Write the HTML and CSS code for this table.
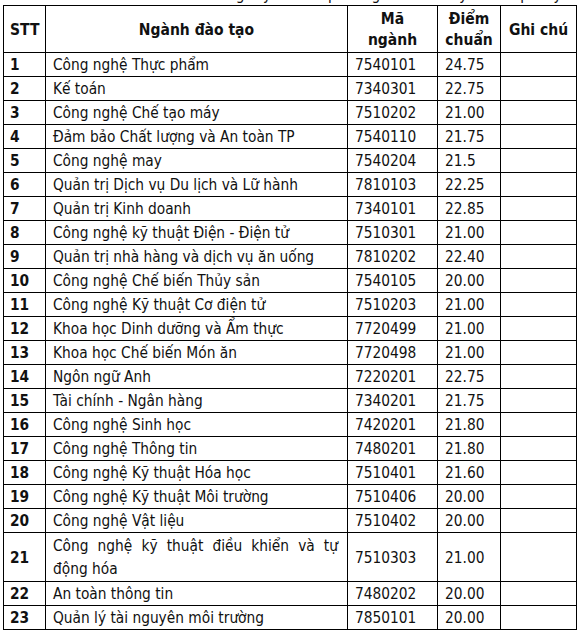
FILE: index.html
```html
<!DOCTYPE html>
<html lang="vi">
<head>
<meta charset="utf-8">
<link rel="stylesheet" href="styles.css">
</head>
<body>
<div class="cap-top"><p>Điểm chuẩn trúng tuyển theo phương thức xét tuyển kết quả kỳ thi tốt nghiệp THPT năm 2021 như sau:</p></div>
<table class="scores">
  <colgroup>
    <col class="c-stt"><col class="c-name"><col class="c-code"><col class="c-score"><col class="c-note">
  </colgroup>
  <thead>
    <tr>
      <th class="stt">STT</th>
      <th>Ngành đào tạo</th>
      <th>Mã<br>ngành</th>
      <th>Điểm<br>chuẩn</th>
      <th>Ghi chú</th>
    </tr>
  </thead>
  <tbody>
    <tr><td class="stt">1</td><td>Công nghệ Thực phẩm</td><td>7540101</td><td>24.75</td><td></td></tr>
    <tr><td class="stt">2</td><td>Kế toán</td><td>7340301</td><td>22.75</td><td></td></tr>
    <tr><td class="stt">3</td><td>Công nghệ Chế tạo máy</td><td>7510202</td><td>21.00</td><td></td></tr>
    <tr><td class="stt">4</td><td>Đảm bảo Chất lượng và An toàn TP</td><td>7540110</td><td>21.75</td><td></td></tr>
    <tr><td class="stt">5</td><td>Công nghệ may</td><td>7540204</td><td>21.5</td><td></td></tr>
    <tr><td class="stt">6</td><td>Quản trị Dịch vụ Du lịch và Lữ hành</td><td>7810103</td><td>22.25</td><td></td></tr>
    <tr><td class="stt">7</td><td>Quản trị Kinh doanh</td><td>7340101</td><td>22.85</td><td></td></tr>
    <tr><td class="stt">8</td><td>Công nghệ kỹ thuật Điện - Điện tử</td><td>7510301</td><td>21.00</td><td></td></tr>
    <tr><td class="stt">9</td><td>Quản trị nhà hàng và dịch vụ ăn uống</td><td>7810202</td><td>22.40</td><td></td></tr>
    <tr><td class="stt">10</td><td>Công nghệ Chế biến Thủy sản</td><td>7540105</td><td>20.00</td><td></td></tr>
    <tr><td class="stt">11</td><td>Công nghệ Kỹ thuật Cơ điện tử</td><td>7510203</td><td>21.00</td><td></td></tr>
    <tr><td class="stt">12</td><td>Khoa học Dinh dưỡng và Ẩm thực</td><td>7720499</td><td>21.00</td><td></td></tr>
    <tr><td class="stt">13</td><td>Khoa học Chế biến Món ăn</td><td>7720498</td><td>21.00</td><td></td></tr>
    <tr><td class="stt">14</td><td>Ngôn ngữ Anh</td><td>7220201</td><td>22.75</td><td></td></tr>
    <tr><td class="stt">15</td><td>Tài chính - Ngân hàng</td><td>7340201</td><td>21.75</td><td></td></tr>
    <tr><td class="stt">16</td><td>Công nghệ Sinh học</td><td>7420201</td><td>21.80</td><td></td></tr>
    <tr><td class="stt">17</td><td>Công nghệ Thông tin</td><td>7480201</td><td>21.80</td><td></td></tr>
    <tr><td class="stt">18</td><td>Công nghệ Kỹ thuật Hóa học</td><td>7510401</td><td>21.60</td><td></td></tr>
    <tr><td class="stt">19</td><td>Công nghệ Kỹ thuật Môi trường</td><td>7510406</td><td>20.00</td><td></td></tr>
    <tr><td class="stt">20</td><td>Công nghệ Vật liệu</td><td>7510402</td><td>20.00</td><td></td></tr>
    <tr class="tall"><td class="stt">21</td><td class="just">Công nghệ kỹ thuật điều khiển và tự động hóa</td><td>7510303</td><td>21.00</td><td></td></tr>
    <tr><td class="stt">22</td><td>An toàn thông tin</td><td>7480202</td><td>20.00</td><td></td></tr>
    <tr><td class="stt">23</td><td>Quản lý tài nguyên môi trường</td><td>7850101</td><td>20.00</td><td></td></tr>
  </tbody>
</table>
<p class="cap-bottom">Thí sinh trúng tuyển xác nhận nhập học trước 17h00 ngày 26/9/2021.</p>
</body>
</html>
```
FILE: styles.css
```css
html, body {
  margin: 0;
  padding: 0;
  background: #fff;
}
body {
  font-family: "DejaVu Sans Condensed", "DejaVu Sans", sans-serif;
  font-stretch: condensed;
  color: #111;
  font-size: 15.3px;
  width: 579px;
  height: 632px;
  overflow: hidden;
}
.cap-top {
  height: 5px;
  overflow: hidden;
  margin-left: 120px;
}
.cap-top p {
  margin: -14px 0 0 0;
  line-height: 18px;
  white-space: nowrap;
}
.scores {
  border-collapse: collapse;
  table-layout: fixed;
  width: 573px;
  margin-left: 3px;
}
.c-stt { width: 42px; }
.c-name { width: 302px; }
.c-code { width: 90px; }
.c-score { width: 63px; }
.c-note { width: 76px; }
.scores th, .scores td {
  border: 1px solid #000;
  padding: 2px 7px 0 7px;
  line-height: 19px;
  vertical-align: middle;
  white-space: nowrap;
}
.scores th {
  height: 44px;
  text-align: center;
  font-weight: bold;
  font-size: 15.5px;
  line-height: 21px;
  padding: 2px 2px 0 2px;
}
.scores th.stt {
  text-align: left;
  padding-left: 6px;
}
.scores td {
  height: 21px;
  text-align: left;
}
.scores td.stt {
  font-weight: bold;
  padding-left: 6px;
}
.scores tr.tall td {
  height: 45px;
}
.scores td.just {
  white-space: normal;
  text-align: justify;
  line-height: 23px;
  padding-right: 9px;
}
.cap-bottom {
  margin: 2px 0 0 35px;
  line-height: 18px;
  white-space: nowrap;
}
```
